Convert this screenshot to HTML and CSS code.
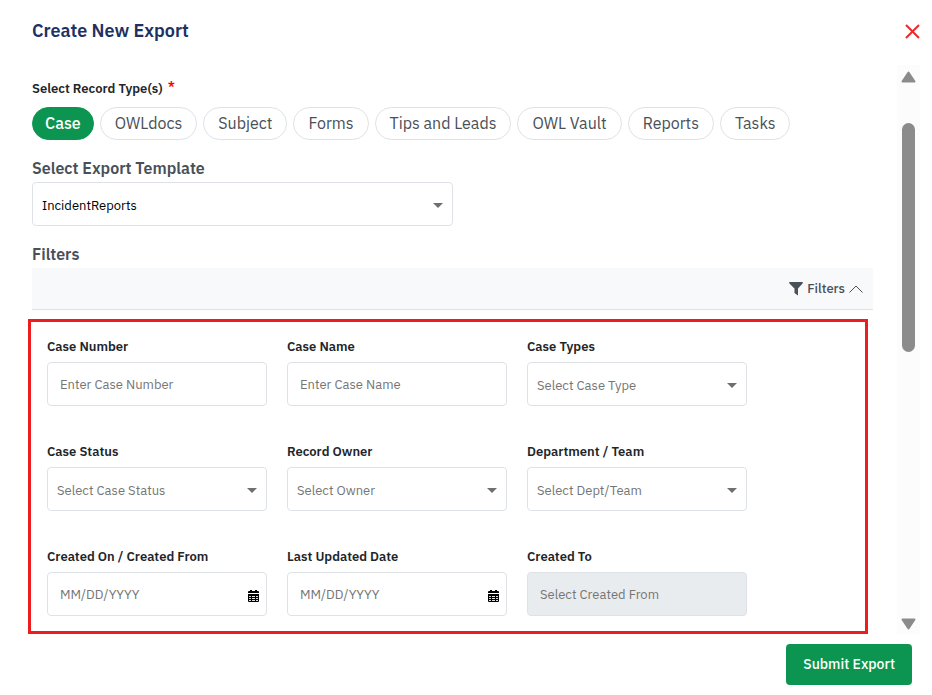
FILE: index.html
```html
<!DOCTYPE html>
<html lang="en">
<head>
    <meta charset="UTF-8">
    <meta name="viewport" content="width=device-width, initial-scale=1">
    <title>Create New Export</title>
    <link rel="stylesheet" href="styles.css">
</head>
<body>
    <form class="export">
        <header class="export-header">
            <h1>Create New Export</h1>
            <button type="button" class="close" aria-label="Close">
                <svg width="15" height="15" viewBox="0 0 15 15"><path d="M1 1l13 13M14 1L1 14" fill="none" stroke="#ea2a2e" stroke-width="2"/></svg>
            </button>
        </header>

        <div class="export-body">
            <main class="content">
                <div class="types-label">Select Record Type(s) <span class="required">*</span></div>
                <div class="pills">
                    <button type="button" class="pill active">Case</button>
                    <button type="button" class="pill">OWLdocs</button>
                    <button type="button" class="pill">Subject</button>
                    <button type="button" class="pill">Forms</button>
                    <button type="button" class="pill">Tips and Leads</button>
                    <button type="button" class="pill">OWL Vault</button>
                    <button type="button" class="pill">Reports</button>
                    <button type="button" class="pill">Tasks</button>
                </div>

                <label class="section-label" for="template">Select Export Template</label>
                <div class="select-wrap template">
                    <select id="template" name="template">
                        <option>IncidentReports</option>
                    </select>
                </div>

                <h2 class="section-label filters-title">Filters</h2>
                <div class="filter-bar">
                    <button type="button" class="filter-toggle" aria-expanded="true">
                        <svg width="14" height="14" viewBox="0 0 14 14"><path d="M.5 0h13q.8 1-.2 1.800L9 6.500v7L5.500 11V6.500L.7 1.800Q-.3 1 .5 0z" fill="#495057"/></svg>
                        <span>Filters</span>
                        <svg width="14" height="8" viewBox="0 0 14 8"><path d="M.5 7.500L7 1l6.500 6.500" fill="none" stroke="#495057"/></svg>
                    </button>
                </div>

                <div class="filters">
                    <div class="field">
                        <label for="caseNumber">Case Number</label>
                        <input type="text" id="caseNumber" placeholder="Enter Case Number">
                    </div>
                    <div class="field">
                        <label for="caseName">Case Name</label>
                        <input type="text" id="caseName" placeholder="Enter Case Name">
                    </div>
                    <div class="field">
                        <label for="caseTypes">Case Types</label>
                        <div class="select-wrap">
                            <select id="caseTypes" class="empty"><option>Select Case Type</option></select>
                        </div>
                    </div>
                    <div class="field">
                        <label for="caseStatus">Case Status</label>
                        <div class="select-wrap">
                            <select id="caseStatus" class="empty"><option>Select Case Status</option></select>
                        </div>
                    </div>
                    <div class="field">
                        <label for="recordOwner">Record Owner</label>
                        <div class="select-wrap">
                            <select id="recordOwner" class="empty"><option>Select Owner</option></select>
                        </div>
                    </div>
                    <div class="field">
                        <label for="department">Department / Team</label>
                        <div class="select-wrap">
                            <select id="department" class="empty"><option>Select Dept/Team</option></select>
                        </div>
                    </div>
                    <div class="field">
                        <label for="createdFrom">Created On / Created From</label>
                        <div class="date-wrap">
                            <input type="text" id="createdFrom" placeholder="MM/DD/YYYY">
                            <svg class="calendar" width="11" height="12" viewBox="0 0 11 12"><path d="M2 0h2v1h3V0h2v1h1q1 0 1 1v1H0V2q0-1 1-1h1zM0 4h11v7q0 1-1 1H1q-1 0-1-1z"/><path d="M1 6h2v1H1zM4 6h3v1H4zM8 6h2v1H8zM1 8h2v1H1zM4 8h3v1H4zM8 8h2v1H8zM1 10h2v1H1zM4 10h3v1H4zM8 10h2v1H8z" fill="#ddd"/></svg>
                        </div>
                    </div>
                    <div class="field">
                        <label for="updatedDate">Last Updated Date</label>
                        <div class="date-wrap">
                            <input type="text" id="updatedDate" placeholder="MM/DD/YYYY">
                            <svg class="calendar" width="11" height="12" viewBox="0 0 11 12"><path d="M2 0h2v1h3V0h2v1h1q1 0 1 1v1H0V2q0-1 1-1h1zM0 4h11v7q0 1-1 1H1q-1 0-1-1z"/><path d="M1 6h2v1H1zM4 6h3v1H4zM8 6h2v1H8zM1 8h2v1H1zM4 8h3v1H4zM8 8h2v1H8zM1 10h2v1H1zM4 10h3v1H4zM8 10h2v1H8z" fill="#ddd"/></svg>
                        </div>
                    </div>
                    <div class="field">
                        <label for="createdTo">Created To</label>
                        <input type="text" id="createdTo" placeholder="Select Created From" disabled>
                    </div>
                </div>
            </main>

            <div class="scroll-track" aria-hidden="true">
                <svg width="15" height="12" viewBox="0 0 15 12"><path d="M7.500 1.500L13.500 10.500H1.500z" fill="#8b8b8b" stroke="#8b8b8b" stroke-width="2" stroke-linejoin="round"/></svg>
                <div class="scroll-thumb"></div>
                <svg width="15" height="12" viewBox="0 0 15 12"><path d="M7.500 10.500L13.500 1.500H1.500z" fill="#8b8b8b" stroke="#8b8b8b" stroke-width="2" stroke-linejoin="round"/></svg>
            </div>
        </div>

        <footer class="export-footer">
            <button type="submit" class="submit">Submit Export</button>
        </footer>
    </form>
</body>
</html>
```
FILE: styles.css
```css
* {
    box-sizing: border-box;
}
body {
    margin: 0;
    background: #fff;
    color: #212529;
    font-family: "IBM Plex Sans", "Noto Sans", sans-serif;
    font-size: 13px;
    line-height: 20px;
}
button,
input,
select {
    font: inherit;
}
button {
    cursor: pointer;
}
svg {
    display: block;
}
.export-header {
    display: flex;
    justify-content: space-between;
    align-items: center;
    padding: 19px 12px 22px 32px;
}
h1 {
    margin: 0;
    color: #21315f;
    font-size: 18px;
    font-weight: 600;
    line-height: 24px;
}
.close {
    padding: 0;
    border: 0;
    background: none;
}
.export-body {
    display: flex;
    gap: 24px;
    padding: 0 12px 0 32px;
}
.content {
    flex: 1;
    min-width: 0;
    padding-top: 14px;
}
.types-label {
    font-weight: 600;
}
.required {
    margin-left: 2px;
    color: #f00;
    vertical-align: top;
    line-height: 16px;
}
.pills {
    display: flex;
    flex-wrap: wrap;
    gap: 6px;
    margin: 8px 0 16px;
}
.pill {
    height: 33px;
    padding: 0 14px 2px;
    border: 1px solid #dee2e6;
    border-radius: 17px;
    background: #fff;
    color: #495057;
    font-size: 16px;
}
.pill.active {
    padding: 0 12px 2px;
    border-color: #0c9550;
    background: #0c9550;
    color: #fff;
    font-weight: 500;
}
.section-label {
    display: block;
    margin: 0 0 2px;
    color: #495057;
    font-size: 16px;
    font-weight: 600;
    line-height: 24px;
}
.filters-title {
    margin-top: 16px;
}
.template {
    width: 50%;
}
.select-wrap,
.date-wrap {
    position: relative;
}
.select-wrap::after {
    content: "";
    position: absolute;
    top: 21px;
    right: 10px;
    border: 5px solid transparent;
    border-top-color: #6f6f6f;
    border-bottom: 0;
    pointer-events: none;
}
input,
select {
    display: block;
    width: 100%;
    height: 44px;
    padding: 0 12px;
    border: 1px solid #dee2e6;
    border-radius: 4px;
    background: #fff;
    color: #000;
}
select {
    appearance: none;
    padding: 3px 24px 0 9px;
}
select.empty,
input::placeholder {
    color: #757575;
    opacity: 1;
}
input:disabled {
    background: #e9ecef;
}
.calendar {
    position: absolute;
    top: 18px;
    right: 8px;
}
.filter-bar {
    display: flex;
    justify-content: flex-end;
    padding: 11px 10px 10px;
    border-bottom: 1px solid #dee2e6;
    background: #f8f9fb;
}
.filter-toggle {
    display: flex;
    align-items: center;
    gap: 4px;
    padding: 0;
    border: 0;
    background: none;
    color: #495057;
    font-weight: 500;
}
.filters {
    display: grid;
    grid-template-columns: repeat(auto-fill, 220px);
    gap: 36px 20px;
    margin: 9px 5px 0 -4px;
    padding: 15px 16px;
    border: 3px solid #ec1c1f;
}
.field label {
    display: block;
    margin-bottom: 5px;
    font-weight: 600;
}
.scroll-track {
    display: flex;
    flex-direction: column;
    align-items: center;
    width: 23px;
    padding: 6px 0 4px;
    background: #fcfcfc;
}
.scroll-thumb {
    width: 13px;
    height: 41%;
    margin: 40px 0 auto;
    border-radius: 7px;
    background: #8b8b8b;
}
.export-footer {
    display: flex;
    justify-content: flex-end;
    padding: 10px 20px;
}
.submit {
    height: 41px;
    padding: 0 17px 2px;
    border: 0;
    border-radius: 4px;
    background: #0c9550;
    color: #fff;
    font-size: 14px;
    font-weight: 500;
}
```
